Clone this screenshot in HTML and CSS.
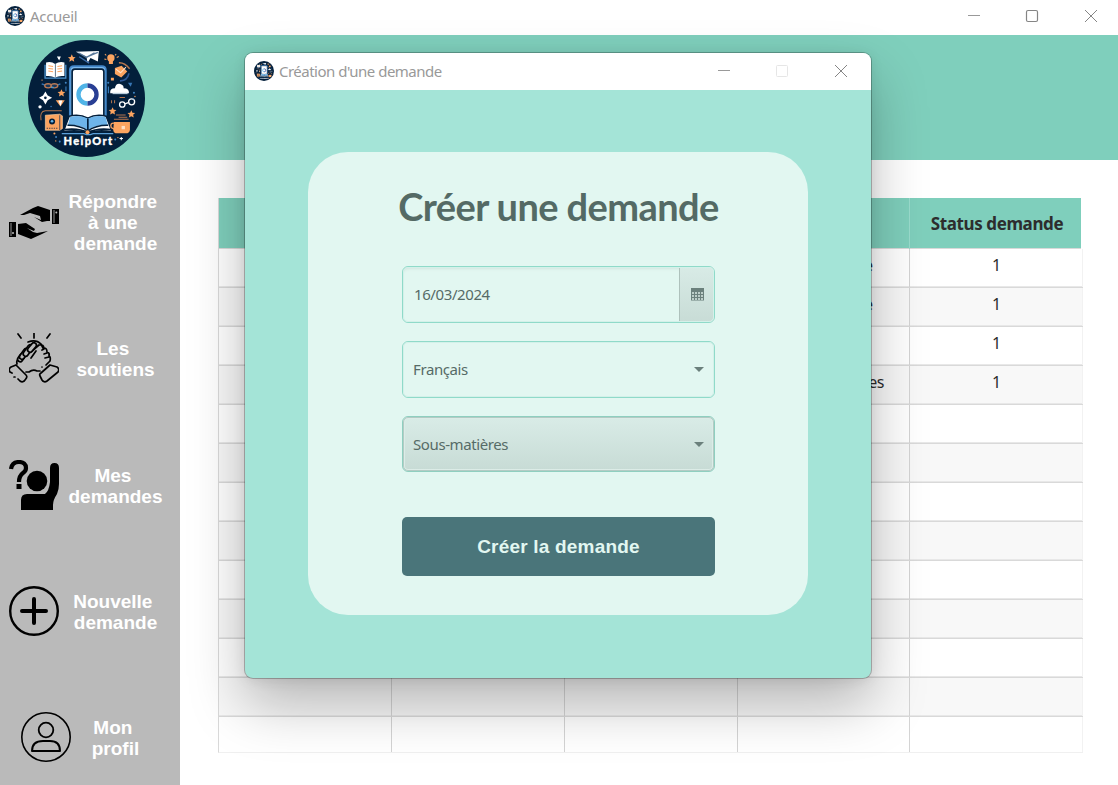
FILE: index.html
```html
<!DOCTYPE html>
<html lang="fr">
<head>
<meta charset="utf-8">
<title>Accueil</title>
<link rel="stylesheet" href="styles.css">
</head>
<body>
<svg class="defs" width="0" height="0" aria-hidden="true">
  <symbol id="logo" viewBox="25 12 350 350">
    <circle cx="200" cy="187" r="175" fill="#031f3b"/>
    <path d="M168 47L237 45L234 76L212 66L203 81L200 62Z" fill="#fff"/>
    <path d="M176 50L200 64L224 50M200 63L234 49" fill="none" stroke="#59799b" stroke-width="4"/>
    <path d="M178 62L208 81" stroke="#3c6ca8" stroke-width="4"/>
    <path d="M114 63l7 0l-3 7z" fill="#fff" stroke="#fff" stroke-width="3"/>
    <g fill="#fba460">
      <path id="st" d="M156 55l3.500 7.500 8 .8-6 5.500 1.800 8-7.300-4-7.300 4 1.800-8-6-5.500 8-.8z"/>
      <use href="#st" x="-31" y="104"/><use href="#st" x="122" y="158"/><use href="#st" x="178" y="167"/>
      <circle cx="273" cy="66" r="11"/><path d="M267 74h12v10h-12zM285 96l20-7 17 17-18 18-19-10zM273 125h9v8h-9zM254 67l6 2-1 3-6-2zM290 63l6-3 1 3-6 3zM256 53l4 4-2 2-4-4zM288 53l-4 4 2 2 4-4z"/>
    </g>
    <path d="M288 99l14 11 16-17" fill="none" stroke="#ffe3ca" stroke-width="3"/>
    <path d="M297 80q17-1 32 18" fill="none" stroke="#b8774f" stroke-width="4"/>
    <path d="M327 112q-5 23-27 22" fill="none" stroke="#2d5795" stroke-width="5"/>
    <path d="M76 86V126H138V86" fill="none" stroke="#4f94cd" stroke-width="4"/>
    <path d="M79 79q17-4 27 5q12-9 28-5v41q-16-2-28 4q-13-6-27-4z" fill="#fff"/>
    <path d="M107 84v38" stroke="#163752" stroke-width="2"/>
    <path d="M86 89l14 2M86 97l14 2M86 105l14 2M113 91l14-2M113 99l14-2M113 107l14-2" stroke="#fba460" stroke-width="3"/>
    <path d="M66 143l12 5M110 148l12-5" stroke="#3777b5" stroke-width="4"/>
    <g fill="#17375a" stroke="#b97955" stroke-width="4"><ellipse cx="85" cy="149" rx="10" ry="6"/><ellipse cx="104" cy="149" rx="10" ry="6"/></g>
    <path d="M94 154h8" stroke="#4698cf" stroke-width="4"/>
    <path d="M77 166l7 12 13 7-13 7-7 13-7-13-12-7 12-7z" fill="#fff"/><circle cx="77" cy="185" r="4" fill="#031f3b"/>
    <circle cx="61" cy="212" r="5" fill="#fff"/>
    <path d="M108 192h27l-13 19z" fill="#fba460"/><path d="M116 193h12l-6 17z" fill="#fff"/>
    <path d="M150 248V102q0-12 13-12h83q12 0 12 12V248" fill="#7bb8eb" stroke="#4387c9" stroke-width="5"/>
    <path d="M157 242V107q0-8 8-8h80q7 0 7 8v135" fill="#fff" stroke="#031f3b" stroke-width="5"/>
    <path d="M203 148a27 27 0 0 0 0 54" fill="none" stroke="#50b4e7" stroke-width="13"/>
    <path d="M203 148a27 27 0 0 1 0 54" fill="none" stroke="#293f94" stroke-width="13"/>
    <path d="M204 246q-25-14-56-6l-18 47q48-8 74 5q27-13 73-5l-18-47q-31-8-55 6z" fill="#fff" stroke="#031f3b" stroke-width="5"/>
    <path d="M204 247q-24-12-53-5l-7 25q34-3 60 14q27-17 60-14l-7-25q-30-7-53 5z" fill="#6eb4e9"/>
    <path d="M204 247v38M143 267q36-1 61 17q25-18 61-17M135 280q42-5 69 9q27-14 69-9" fill="none" stroke="#031f3b" stroke-width="5"/>
    <path d="M126 292h66l8 3h12l8-3h60" fill="none" stroke="#5a9fd8" stroke-width="4"/>
    <circle cx="203" cy="288" r="6" fill="#fba460"/>
    <path d="M64 252q-5-27 13-28h49" fill="none" stroke="#b8774f" stroke-width="3"/>
    <path d="M77 237l43-3 8 5v38l-8 5H77z" fill="#fba460" stroke="#ffd0a1" stroke-width="2"/>
    <path d="M120 237v44" stroke="#4b4b54" stroke-width="3"/>
    <circle cx="97" cy="256" r="9" fill="#031f3b"/><circle cx="97" cy="255" r="4" fill="#66b5e9"/>
    <path d="M81 276h33" stroke="#433f4b" stroke-width="3" stroke-dasharray="4 3"/>
    <path d="M271 171q-2-15 14-15q3-16 18-12q9 3 8 12q17 0 16 15z" fill="#fff"/><path d="M278 172h45" stroke="#b9cbd9" stroke-width="4"/>
    <path d="M324 140h13l-5 12z" fill="#3776b4"/>
    <g fill="none" stroke="#fff" stroke-width="4"><circle cx="307" cy="205" r="8"/><circle cx="335" cy="197" r="9"/><path d="M315 203l10-4"/></g>
    <path d="M275 192v9M284 192v9M299 184h16" stroke="#b8774f" stroke-width="3"/>
    <path d="M288 236h29M296 243h26M282 249h44" stroke="#b8774f" stroke-width="3"/>
    <path d="M282 257h48v24q-2 10-12 10h-27q-10 0-11-10z" fill="#fba460"/>
    <path d="M282 261q-15-2-10 13l9 5" transform="translate(2 0)" fill="none" stroke="#fba460" stroke-width="4"/><rect x="305" y="269" width="10" height="10" fill="#ffe0c4"/>
    <g fill="#4186c5"><circle cx="138" cy="140" r="3"/><circle cx="265" cy="140" r="3"/><circle cx="342" cy="170" r="3"/><circle cx="340" cy="188" r="2"/><circle cx="109" cy="302" r="3"/><circle cx="120" cy="316" r="3"/><circle cx="286" cy="310" r="3"/><circle cx="94" cy="211" r="2"/><path d="M137 151h3v14h-3zM264 151h3v20h-3z"/></g>
    <g fill="#fba460"><circle cx="104" cy="292" r="3"/><circle cx="108" cy="314" r="2"/><circle cx="67" cy="132" r="2"/><circle cx="345" cy="181" r="2"/><circle cx="294" cy="304" r="2"/></g>
    <path d="M304 302v10M299 307h10" stroke="#fff" stroke-width="3"/>
    <text x="131" y="326" class="logo-text" textLength="146" lengthAdjust="spacing">HelpOrt</text>
  </symbol>
</svg>
<div class="app">
  <div class="titlebar">
    <svg class="mini"><use href="#logo"/></svg>
    <span class="caption">Accueil</span>
    <svg class="controls" width="130" height="14" viewBox="0 0 130 14" fill="none" stroke="#858585"><path d="M0 6.500h12" stroke="#999"/><path d="M117 1l12 12M129 1l-12 12"/><rect x="58.500" y="1.500" width="11" height="11" rx="1.500" stroke-width="1.200"/></svg>
  </div>
  <header class="banner"><svg class="logo"><use href="#logo"/></svg></header>
  <div class="body">
    <nav class="side">
      <a class="item tall">
        <svg class="icon" viewBox="0 0 50 50"><g transform="translate(0 -1)"><path d="M11 18L24 11L29 9L41 13V24H38L33 25L25 20L32 23L31 19L21 16L15 18ZM9 27L17 26L26 32L25 34L18 31L24 35L28 36L39 34L33 37L22 42L9 37ZM43 12h7v15h-7zM0 25h7v15H0z"/><path d="M45 13v13M2 26v13" stroke="#bababa" stroke-width=".8" fill="none"/><circle cx="47.300" cy="15.500" r="1" fill="#bababa"/><circle cx="4" cy="36" r="1" fill="#bababa"/></g></svg>
        <span>Répondre&nbsp;<br>à une&nbsp;<br>demande</span>
      </a>
      <a class="item two">
        <svg class="icon" viewBox="0 0 50 50" fill="none" stroke="#000" stroke-width="1.700" stroke-linecap="round" stroke-linejoin="round">
          <path d="M9 1l3 4M25 0v5M41 1l-3 4"/>
          <path d="M19 9q8-3 13 2l2 4M31 12q3-1 4 3q3 0 3 4q3 1 2 4q2 1 1 5l-4 4M33 17l2-1M35 21l3-1M36 25l4-1"/>
          <path d="M10 26q-3 1-2 5M17 39l3 0q4-3 8-1h3M30 12l-7 6M27 18l-5 7"/>
          <rect x="9.500" y="20" width="5" height="9" rx="2.500" transform="rotate(35 12 25)" fill="#bababa"/>
          <rect x="12.500" y="15" width="5" height="12" rx="2.500" transform="rotate(35 15 21)" fill="#bababa"/>
          <rect x="16.500" y="11" width="5" height="13" rx="2.500" transform="rotate(35 19 17.500)" fill="#bababa"/>
          <rect x="20.500" y="9" width="5" height="11" rx="2.500" transform="rotate(40 23 14.500)" fill="#bababa"/>
          <path d="M7 32l-5 2q-3 2-1 5l2 1M5 44l1 0M9 46l2 2q3 2 5-1q3-3 1-5L7 32M41 32l7 2q3 2 1 5L38 48q-3 2-5-1l-2-4q-1-2 1-3zM33 34v0"/>
        </svg>
        <span>Les&nbsp;<br>soutiens</span>
      </a>
      <a class="item three">
        <svg class="icon" viewBox="0 0 50 50"><path d="M2 9q1-7 8-7q7 0 7 6q0 3-3 5q-4 3-4 9" fill="none" stroke="#000" stroke-width="4.200"/><path d="M7.500 24h5v5h-5zM12 50V40q0-6 6-6h18q4-3 5-12V8q0-5 4.500-5t4.500 5v16q0 5-2 10q-4 6-4 11v5z"/><circle cx="28" cy="21" r="10.300"/></svg>
        <span>Mes&nbsp;<br>demandes</span>
      </a>
      <a class="item">
        <svg class="icon" viewBox="0 0 50 50" fill="none" stroke="#000" stroke-linecap="round"><circle cx="25" cy="25" r="23.800" stroke-width="2.400"/><path d="M25 13v24M13 25h24" stroke-width="4"/></svg>
        <span>Nouvelle&nbsp;<br>demande</span>
      </a>
      <a class="item profile">
        <svg class="icon" viewBox="0 0 50 50" fill="none" stroke="#000"><circle cx="25" cy="25" r="24.200" stroke-width="1.600"/><circle cx="25" cy="18" r="7.300" stroke-width="1.800"/><path d="M11 39q0-10 11-10h7q10 0 10 10z" stroke-width="2" stroke-linejoin="round"/></svg>
        <span>Mon&nbsp;<br>profil</span>
      </a>
    </nav>
    <main class="content">
      <div class="table">
        <div class="row head"><i></i><i></i><i></i><i></i><i>Status demande</i></div>
        <div class="row"><i></i><i></i><i></i><i class="sub">e</i><i>1</i></div>
        <div class="row"><i></i><i></i><i></i><i class="sub">e</i><i>1</i></div>
        <div class="row"><i></i><i></i><i></i><i></i><i>1</i></div>
        <div class="row"><i></i><i></i><i></i><i class="sub wide">es</i><i>1</i></div>
        <div class="row"><i></i><i></i><i></i><i></i><i></i></div>
        <div class="row"><i></i><i></i><i></i><i></i><i></i></div>
        <div class="row"><i></i><i></i><i></i><i></i><i></i></div>
        <div class="row"><i></i><i></i><i></i><i></i><i></i></div>
        <div class="row"><i></i><i></i><i></i><i></i><i></i></div>
        <div class="row"><i></i><i></i><i></i><i></i><i></i></div>
        <div class="row"><i></i><i></i><i></i><i></i><i></i></div>
        <div class="row"><i></i><i></i><i></i><i></i><i></i></div>
        <div class="row last"><i></i><i></i><i></i><i></i><i></i></div>
      </div>
    </main>
  </div>
  <section class="dialog">
    <div class="titlebar inner">
      <svg class="mini"><use href="#logo"/></svg>
      <span class="caption long">Création d'une demande</span>
      <svg class="controls" width="130" height="14" viewBox="0 0 130 14" fill="none" stroke="#858585"><path d="M0 6.500h12" stroke="#999"/><path d="M117 1l12 12M129 1l-12 12"/><rect x="58.500" y="1.500" width="11" height="11" rx="1" stroke="#e6e6e6"/></svg>
    </div>
    <div class="dialog-body">
      <form class="card">
        <h1>Créer une demande</h1>
        <div class="field date"><span>16/03/2024</span><span class="picker"><svg width="13" height="13" viewBox="0 0 13 13"><path d="M0 0h13v12.500H0z" fill="#6b807c"/><path d="M1 5h11M1 8h11M1 11h11" stroke="#d8e6e1" stroke-width="1.400" stroke-dasharray="2 1"/></svg></span></div>
        <div class="field"><span>Français</span><b class="arrow"></b></div>
        <div class="field raised"><span>Sous-matières</span><b class="arrow"></b></div>
        <button type="button">Créer la demande</button>
      </form>
    </div>
  </section>
</div>
</body>
</html>
```
FILE: styles.css
```css
* { box-sizing: border-box; }
body { margin: 0; background: #fff; font-family: "Noto Sans", "Open Sans", sans-serif; }
.defs { position: absolute; }
.app { position: relative; width: 1118px; height: 785px; overflow: hidden; display: flex; flex-direction: column; }
.logo-text { font: 900 33px Lato, sans-serif; fill: #fff; stroke: #fff; stroke-width: 1px; }

.titlebar { display: flex; align-items: center; height: 35px; flex: none; padding: 0 20px 3px 5px; background: #fff; }
.mini { width: 20px; height: 20px; flex: none; }
.caption { margin-left: 5px; font-size: 15px; line-height: 20px; letter-spacing: -0.3px; color: #999; white-space: nowrap; }
.controls { margin-left: auto; flex: none; }

.banner { height: 125px; flex: none; padding: 5px 28px; background: #7fcfbc; }
.logo { display: block; width: 117px; height: 117px; }

.body { display: flex; flex: 1; min-height: 0; }
.side { width: 180px; flex: none; background: #bababa; padding: 31px 0 0 9px; display: flex; flex-direction: column; gap: 76px; }
.item { display: flex; align-items: center; height: 50px; flex: none; color: #fff; font: bold 19px/21px "Liberation Sans", Arial, sans-serif; }
.item.tall { height: 63px; }
.item.two { margin-top: 3px; }
.item.three { margin-top: 1px; }
.item span { width: 113px; padding-top: 2px; text-align: center; white-space: nowrap; }
.item.tall span { padding-top: 0; }
.item.profile { padding-left: 12px; }
.item.profile span { width: 89px; }
.icon { width: 50px; height: 50px; flex: none; }

.content { flex: 1; padding: 38px 0 0 38px; }
.table { width: 865px; border-left: 1px solid #d9d9d9; border-bottom: 1px solid #f0f0f0; }
.row { display: grid; grid-template-columns: 173px 173px 173px 172px 173px; height: 39px; border-bottom: 1px solid #d9d9d9; box-shadow: inset 0 -1px #e8e8e8; }
.row:nth-child(odd) { background: #f8f8f8; }
.row:nth-child(even) { background: #fff; }
.row i { font-style: normal; font-size: 16px; line-height: 32px; text-align: center; color: #2d2d2d; border-right: 1px solid #d4d4d4; }
.row i:last-child { padding-left: 1px; border-right-color: #f2f2f2; }
.row .sub { text-align: right; padding-right: 36px; }
.row .wide { padding-right: 25px; letter-spacing: -0.5px; }
.row.head { height: 51px; background: #7fcfbc; box-shadow: none; margin-right: 2px; grid-template-columns: 173px 173px 173px 172px 171px; }
.row.head i { font-weight: 700; font-size: 17px; line-height: 51px; letter-spacing: -0.4px; border-color: #9bdccd; white-space: nowrap; }
.row.head i:last-child { padding-left: 3px; border-right: 0; }
.row.last { height: 35px; background: #fff; border-bottom: 0; box-shadow: none; }

.dialog { position: absolute; left: 245px; top: 53px; width: 626px; height: 625px; border-radius: 8px; background: #a4e4d7; display: flex; flex-direction: column; box-shadow: 0 0 0 1px rgba(0,0,0,.25), 0 26px 56px rgba(0,0,0,.27), 0 2px 14px rgba(0,0,0,.09); }
.inner { height: 37px; padding: 0 23px 1px 9px; border-radius: 8px 8px 0 0; }
.long { letter-spacing: -0.51px; }
.dialog-body { padding: 62px 63px; }
.card { width: 500px; height: 463px; border-radius: 40px; background: #e2f7f1; padding: 29px 93px 0 94px; display: flex; flex-direction: column; }
h1 { margin: 0 -20px 35px; height: 50px; font: 700 38px/50px Lato, sans-serif; letter-spacing: -0.6px; color: #546a65; text-align: center; white-space: nowrap; }
.field { display: flex; align-items: center; justify-content: space-between; height: 57px; margin-bottom: 18px; padding: 0 10px; border: 1px solid #8fdac9; border-radius: 6px; outline: 1px solid #d3f1e9; outline-offset: -2px; color: #566b67; font-size: 15px; letter-spacing: -0.4px; }
.field > span:first-child { padding-bottom: 2px; }
.date { padding: 0 0 0 11px; box-shadow: inset 0 3px 3px -1px #d2e5df; overflow: hidden; }
.picker { display: flex; align-items: center; justify-content: center; width: 35px; height: 100%; border-left: 1px solid #aec1bc; background: linear-gradient(#d8ebe6, #c8dcd6); }
.raised { height: 56px; border-color: #8fcfc0; outline-color: #b3cbc4; background: linear-gradient(#d9ece7, #c7dbd5); box-shadow: inset 0 0 0 2px #dcece7; }
.raised > span:first-child { padding-bottom: 0; }
.arrow { width: 0; height: 0; border: 5px solid transparent; border-top-color: #6b807c; border-bottom: 0; }
button { height: 59px; margin-top: 27px; border: 0; border-radius: 5px; background: #4a757a; color: #e2f7f1; font: bold 19px "Liberation Sans", Arial, sans-serif; letter-spacing: 0.2px; }
```
